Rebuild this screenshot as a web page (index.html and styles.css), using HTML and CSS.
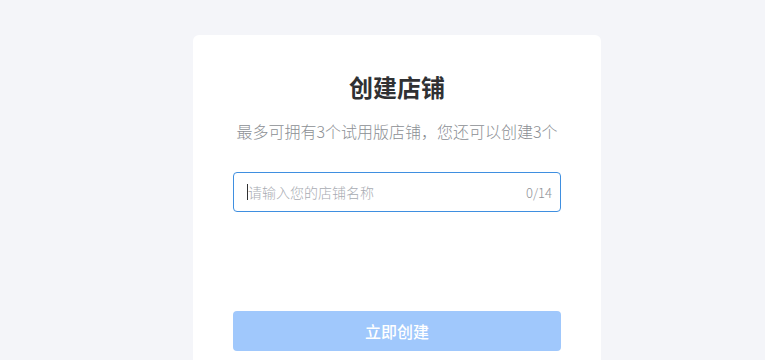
FILE: index.html
```html
<!DOCTYPE html>
<html lang="zh-CN">
<head>
<meta charset="utf-8">
<title>创建店铺</title>
<link rel="stylesheet" href="styles.css">
</head>
<body>
<div class="page">
  <div class="card">
    <h1 class="title">创建店铺</h1>
    <p class="subtitle">最多可拥有3个试用版店铺，您还可以创建3个</p>
    <div class="field">
      <span class="caret"></span>
      <span class="placeholder">请输入您的店铺名称</span>
      <span class="count">0/14</span>
    </div>
    <button class="submit" type="button">立即创建</button>
  </div>
</div>
</body>
</html>
```

FILE: styles.css
```css
html, body {
  margin: 0;
  padding: 0;
  background: #f4f5f9;
  font-family: "Noto Sans CJK SC", "Noto Sans", "Liberation Sans", sans-serif;
}
.page {
  padding: 35px 0 0 193px;
}
.card {
  width: 328px;
  padding: 36px 40px 40px;
  background: #ffffff;
  border-radius: 6px;
  display: flex;
  flex-direction: column;
  align-items: stretch;
}
.title {
  margin: 0;
  font-size: 24px;
  line-height: 32px;
  font-weight: 700;
  color: #303133;
  text-align: center;
}
.subtitle {
  margin: 18px -10px 0;
  font-size: 16px;
  line-height: 20px;
  font-weight: 300;
  color: #8c8f94;
  text-align: center;
}
.field {
  margin-top: 31px;
  height: 38px;
  border: 1px solid #3f8fe0;
  border-radius: 4px;
  display: flex;
  align-items: center;
  padding: 0 8px 0 13px;
}
.caret {
  width: 1px;
  height: 16px;
  background: #303133;
}
.placeholder {
  flex: 1;
  font-size: 14px;
  font-weight: 300;
  color: #a8abb2;
}
.count {
  font-size: 13px;
  font-weight: 300;
  color: #909399;
}
.submit {
  margin-top: 99px;
  height: 40px;
  border: none;
  border-radius: 4px;
  background: #a0c8fc;
  color: #ffffff;
  font-family: inherit;
  font-size: 16px;
  font-weight: 500;
}
```
